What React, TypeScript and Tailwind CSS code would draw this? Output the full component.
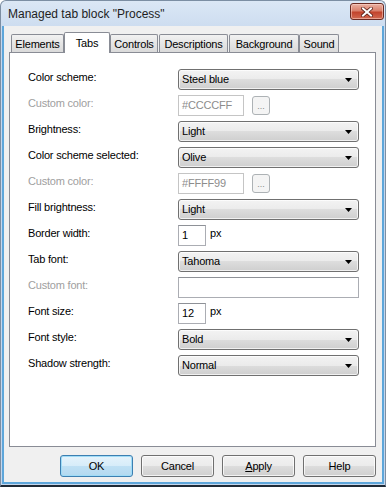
import React from 'react'

const ui = "font-['Liberation_Sans',Arial,sans-serif] text-[11px] tracking-[-0.2px]"

function Arrow() {
  return (
    <svg width="7" height="4" viewBox="0 0 7 4" className="shrink-0">
      <path d="M0 0H7L3.5 4Z" fill="#000" />
    </svg>
  )
}

function Combo({ value }: { value: string }) {
  return (
    <div className="flex h-[21px] w-[181px] items-center justify-between rounded-[3px] border border-[#707070] bg-[linear-gradient(#f3f3f3_0%,#ebebeb_50%,#dddddd_50%,#cfcfcf_100%)] pl-[3px] pr-[6px] text-black shadow-[inset_0_0_0_1px_rgba(255,255,255,0.7)]">
      <span>{value}</span>
      <Arrow />
    </div>
  )
}

function Field({ value, w, disabled }: { value: string; w: string; disabled?: boolean }) {
  return (
    <div
      className={`flex h-[21px] ${w} items-center border pl-[3px] ${
        disabled ? 'border-[#c5c5c5] text-[#8c8c8c]' : 'border-[#abadb3] border-t-[#8e9197] text-black'
      } bg-white`}
    >
      {value}
    </div>
  )
}

function Dots() {
  return (
    <div className="ml-[8px] mt-[1px] flex h-[19px] w-[18px] items-end justify-center rounded-[3px] border border-[#adb2b5] bg-[#f4f4f4] pb-[3px] text-[9px] leading-none tracking-normal text-[#8a8a8a]">
      ...
    </div>
  )
}

function Row({ label, disabled, children }: { label: string; disabled?: boolean; children: React.ReactNode }) {
  return (
    <div className="flex h-[21px] items-start">
      <div className={`w-[150px] pt-[2px] leading-[13px] ${disabled ? 'text-[#a0a0a0]' : 'text-black'}`}>{label}</div>
      <div className="flex items-start">{children}</div>
    </div>
  )
}

function Px() {
  return <span className="ml-[4px] pt-[2px] leading-[13px] text-black">px</span>
}

const tabs = [
  { name: 'Elements', cls: 'w-[53px]' },
  { name: 'Tabs', cls: 'w-[46px]', active: true },
  { name: 'Controls', cls: 'w-[48px]' },
  { name: 'Descriptions', cls: 'w-[69px] ml-[1px]' },
  { name: 'Background', cls: 'w-[70px] ml-[1px]' },
  { name: 'Sound', cls: 'w-[40px]' },
]

function Btn({ children, primary }: { children: React.ReactNode; primary?: boolean }) {
  return (
    <div
      className={`flex h-[22px] w-[73px] items-center justify-center rounded-[3px] border text-black ${
        primary
          ? 'border-[#3c7fb1] bg-[linear-gradient(#e5f3fb_0%,#d6ecf9_50%,#bfe0f4_50%,#b3d9f0_100%)] shadow-[inset_0_0_0_1px_#9fdcf7]'
          : 'border-[#707070] bg-[linear-gradient(#f2f2f2_0%,#ebebeb_50%,#dddddd_50%,#cfcfcf_100%)] shadow-[inset_0_0_0_1px_rgba(255,255,255,0.75)]'
      }`}
    >
      {children}
    </div>
  )
}

export default function App() {
  return (
    <div className={`flex h-[487px] w-[386px] flex-col overflow-hidden rounded-t-[6px] border-x border-t border-b-2 border-x-[#7c8ea3] border-t-[#7c8ea3] border-b-[#1f2a36] bg-[linear-gradient(#dbe7f5,#c5d7ed_40px,#c5d7ed)] ${ui}`}>
      <div className="flex h-[25px] shrink-0 items-center justify-between pl-[7px] pr-[1px]">
        <span className="text-[12px] tracking-normal text-[#1e1e1e]">Managed tab block "Process"</span>
        <div className="-mt-[4px] flex h-[17px] w-[34px] items-center justify-center rounded-[3px] border border-[#6b2a22] bg-[linear-gradient(#eab0a2_0%,#d9806c_45%,#c2442d_55%,#d26a52_100%)] shadow-[inset_0_0_0_1px_rgba(255,220,210,0.5)]">
          <svg width="12" height="10" viewBox="0 0 12 10">
            <path d="M2 1.5L10 8.5M10 1.5L2 8.5" stroke="#5a2018" strokeWidth="3.6" strokeLinecap="square" />
            <path d="M2 1.5L10 8.5M10 1.5L2 8.5" stroke="#fff" strokeWidth="2" strokeLinecap="square" />
          </svg>
        </div>
      </div>

      <div className="mx-[1px] mb-[1px] flex flex-1 flex-col border-x-2 border-b-2 border-[#5ea6da] bg-[#f0f0f0]">
        <div className="ml-[5px] mt-[6px] w-[367px]">
          <div className="flex h-[20px] items-end pl-[2px]">
            {tabs.map((t) =>
              t.active ? (
                <div
                  key={t.name}
                  className={`relative z-10 -mb-[1px] flex h-[21px] items-center justify-center rounded-t-[2px] border border-b-0 border-[#898c95] bg-white text-black ${t.cls}`}
                >
                  {t.name}
                </div>
              ) : (
                <div
                  key={t.name}
                  className={`flex h-[18px] items-center justify-center rounded-t-[2px] border border-b-0 border-[#898c95] bg-[linear-gradient(#f2f2f2,#e4e4e4_55%,#dadada)] pt-[1px] text-black ${t.cls}`}
                >
                  {t.name}
                </div>
              )
            )}
          </div>

          <div className="flex h-[395px] flex-col gap-[5px] border border-[#898c95] bg-white pl-[18px] pt-[16px]">
            <Row label="Color scheme:">
              <Combo value="Steel blue" />
            </Row>
            <Row label="Custom color:" disabled>
              <Field value="#CCCCFF" w="w-[66px]" disabled />
              <Dots />
            </Row>
            <Row label="Brightness:">
              <Combo value="Light" />
            </Row>
            <Row label="Color scheme selected:">
              <Combo value="Olive" />
            </Row>
            <Row label="Custom color:" disabled>
              <Field value="#FFFF99" w="w-[66px]" disabled />
              <Dots />
            </Row>
            <Row label="Fill brightness:">
              <Combo value="Light" />
            </Row>
            <Row label="Border width:">
              <Field value="1" w="w-[28px]" />
              <Px />
            </Row>
            <Row label="Tab font:">
              <Combo value="Tahoma" />
            </Row>
            <Row label="Custom font:" disabled>
              <Field value="" w="w-[181px]" />
            </Row>
            <Row label="Font size:">
              <Field value="12" w="w-[28px]" />
              <Px />
            </Row>
            <Row label="Font style:">
              <Combo value="Bold" />
            </Row>
            <Row label="Shadow strength:">
              <Combo value="Normal" />
            </Row>
          </div>
        </div>

        <div className="mt-[8px] flex gap-[8px] pl-[56px]">
          <Btn primary>OK</Btn>
          <Btn>Cancel</Btn>
          <Btn>
            <span>
              <span className="underline">A</span>pply
            </span>
          </Btn>
          <Btn>Help</Btn>
        </div>
      </div>
    </div>
  )
}
